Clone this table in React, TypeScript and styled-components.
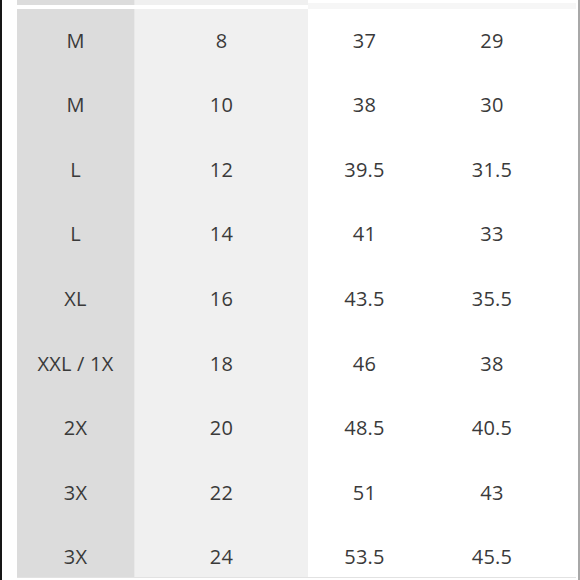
import React from "react";
import styled, { createGlobalStyle, css } from "styled-components";

const Global = createGlobalStyle`
  html, body { margin: 0; padding: 0; background: #ffffff; }
  body { font-family: "Open Sans", "Liberation Sans", sans-serif; }
`;

const Frame = styled.div`
  box-sizing: border-box;
  width: 580px;
  height: 580px;
  overflow: hidden;
  border-left: 2px solid #161616;
  border-right: 2px solid #a8a8a8;
  padding-left: 15px;
  padding-right: 2px;
  background: #ffffff;
`;

const Table = styled.div`
  display: grid;
  grid-template-columns: 117px 174px 113px 142px 1fr;
  grid-template-rows: 5px 4.3px repeat(9, 64.6px);
  height: 577px;
  overflow: hidden;
  border-bottom: 1px solid #e2e2e2;
`;

type Col = 1 | 2 | 3 | 4 | 5;

const bg = (col: Col) =>
  col === 1 ? "#dcdcdc" : col === 2 ? "#f0f0f0" : "#ffffff";

const Cell = styled.div<{ $col: Col }>`
  display: flex;
  align-items: center;
  justify-content: center;
  padding-bottom: 2px;
  background: ${(p) => bg(p.$col)};
  ${(p) =>
    p.$col === 2 &&
    css`
      border-left: 1px solid #e9e9e9;
    `}
  color: #3a3a3a;
  font-size: 20px;
  font-weight: 400;
  letter-spacing: 0.2px;
  line-height: 1;
  white-space: nowrap;
`;

const HeadCell = styled.div<{ $col: Col }>`
  background: ${(p) => bg(p.$col)};
  ${(p) =>
    p.$col >= 3 &&
    css`
      border-bottom: 2px solid #f6f6f6;
    `}
  ${(p) =>
    p.$col === 2 &&
    css`
      border-left: 1px solid #e9e9e9;
    `}
`;

const GapCell = styled.div<{ $faint: boolean }>`
  background: ${(p) => (p.$faint ? "#f6f6f6" : "#ffffff")};
`;

const rows: [string, string, string, string][] = [
  ["M", "8", "37", "29"],
  ["M", "10", "38", "30"],
  ["L", "12", "39.5", "31.5"],
  ["L", "14", "41", "33"],
  ["XL", "16", "43.5", "35.5"],
  ["XXL / 1X", "18", "46", "38"],
  ["2X", "20", "48.5", "40.5"],
  ["3X", "22", "51", "43"],
  ["3X", "24", "53.5", "45.5"],
];

const cols: Col[] = [1, 2, 3, 4, 5];

export default function App() {
  return (
    <>
      <Global />
      <Frame>
        <Table>
          {cols.map((c) => (
            <HeadCell key={`h${c}`} $col={c} />
          ))}
          {cols.map((c) => (
            <GapCell key={`g${c}`} $faint={c >= 3} />
          ))}
          {rows.map((r, i) => (
            <React.Fragment key={i}>
              {r.map((v, j) => (
                <Cell key={j} $col={(j + 1) as Col}>
                  {v}
                </Cell>
              ))}
              <Cell $col={5} />
            </React.Fragment>
          ))}
        </Table>
      </Frame>
    </>
  );
}
